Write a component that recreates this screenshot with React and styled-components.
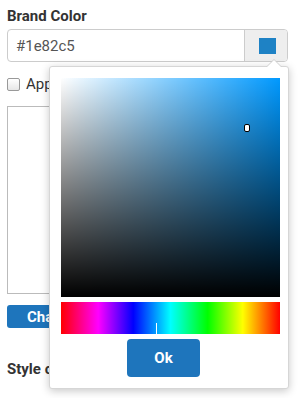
import styled, { createGlobalStyle } from "styled-components";

const Global = createGlobalStyle`
  html, body { margin: 0; padding: 0; background: #fff; }
  body { font-family: Roboto, "Liberation Sans", Arial, sans-serif; color: #333; }
`;

const Page = styled.div`
  width: 300px;
  height: 398px;
  overflow: hidden;
  padding: 7px 7px 0 7px;
  box-sizing: border-box;
  display: flex;
  flex-direction: column;
`;

const Label = styled.div`
  font-size: 15px;
  font-weight: 700;
  color: #333;
  line-height: 18px;
  margin-top: ${(p) => p.$top || 0}px;
`;

const Field = styled.div`
  position: relative;
  display: flex;
  margin-top: 4px;
  width: 281px;
  height: 33px;
  box-sizing: border-box;
  border: 1px solid #ccc;
  border-radius: 4px;
`;

const HexInput = styled.div`
  flex: 1;
  display: flex;
  align-items: center;
  padding-left: 8px;
  font-size: 15px;
  color: #555;
`;

const Addon = styled.div`
  width: 42px;
  background: #eee;
  border-left: 1px solid #ccc;
  border-radius: 0 3px 3px 0;
  display: flex;
  align-items: center;
  justify-content: center;
`;

const Swatch = styled.div`
  width: 17px;
  height: 16px;
  background: ${(p) => p.$color};
  margin-left: 2px;
`;

const CheckRow = styled.label`
  display: flex;
  align-items: center;
  gap: 6px;
  margin-top: 13px;
  font-size: 15px;
  color: #333;
`;

const Check = styled.span`
  width: 11px;
  height: 11px;
  border: 1px solid #999;
  border-radius: 2px;
  background: linear-gradient(#fff, #e6e6e6);
`;

const TextArea = styled.div`
  margin-top: 13px;
  width: 281px;
  height: 188px;
  box-sizing: border-box;
  border: 1px solid #bbb;
`;

const Button = styled.div`
  margin-top: 11px;
  width: 140px;
  height: 23px;
  background: #1e75bc;
  border-radius: 3px;
  color: #fff;
  font-weight: 700;
  font-size: 15px;
  display: flex;
  align-items: center;
  padding-left: 20px;
  box-sizing: border-box;
`;

const Popover = styled.div`
  position: absolute;
  top: 36px;
  left: 41px;
  width: 240px;
  box-sizing: border-box;
  padding: 11px 7px 11px 11px;
  background: #fff;
  border: 1px solid #d6d6d6;
  border-radius: 3px;
  box-shadow: 0 2px 8px rgba(0, 0, 0, 0.22);
  display: flex;
  flex-direction: column;
  align-items: flex-start;
  z-index: 10;

  &::before, &::after {
    content: "";
    position: absolute;
    right: 6px;
    border: 8px solid transparent;
    border-top: 0;
  }
  &::before {
    top: -8px;
    border-bottom-color: #cfcfcf;
  }
  &::after {
    top: -7px;
    border-bottom-color: #fff;
  }
`;

const Saturation = styled.div`
  position: relative;
  width: 219px;
  height: 219px;
  background:
    linear-gradient(to top, #000, rgba(0, 0, 0, 0)),
    linear-gradient(to right, #fff, rgba(255, 255, 255, 0)),
    ${(p) => p.$hue};
`;

const Cursor = styled.div`
  position: absolute;
  width: 4px;
  height: 6px;
  margin: -3px 0 0 -2px;
  border: 1px solid #000;
  border-radius: 2px;
  background: #fff;
`;

const Hue = styled.div`
  position: relative;
  margin-top: 5px;
  width: 219px;
  height: 32px;
  background: linear-gradient(
    to right,
    #ff0000 0%,
    #ff00ff 17%,
    #0000ff 33%,
    #00ffff 50%,
    #00ff00 67%,
    #ffff00 83%,
    #ff0000 100%
  );
`;

const HueMarker = styled.div`
  position: absolute;
  bottom: 0;
  width: 1px;
  height: 11px;
  background: #fff;
`;

const OkButton = styled.button`
  margin: 5px 0 0 66px;
  width: 73px;
  height: 38px;
  border: 0;
  border-radius: 4px;
  background: #1e75bc;
  color: #fff;
  font-family: Roboto, "Liberation Sans", Arial, sans-serif;
  font-weight: 700;
  font-size: 15px;
`;

export default function App() {
  const color = "#1e82c5";
  const hueDeg = 204;
  const sat = 0.845;
  const val = 0.776;
  return (
    <>
      <Global />
      <Page>
        <Label>Brand Color</Label>
        <Field>
          <HexInput>{color}</HexInput>
          <Addon>
            <Swatch $color={color} />
          </Addon>
          <Popover>
            <Saturation $hue={`hsl(${hueDeg}, 100%, 50%)`}>
              <Cursor style={{ left: `${sat * 100}%`, top: `${(1 - val) * 100}%` }} />
            </Saturation>
            <Hue>
              <HueMarker style={{ left: `${(1 - hueDeg / 360) * 100}%` }} />
            </Hue>
            <OkButton>Ok</OkButton>
          </Popover>
        </Field>
        <CheckRow>
          <Check />
          Apply to all pages
        </CheckRow>
        <TextArea />
        <Button>Change</Button>
        <Label $top={32}>Style options</Label>
      </Page>
    </>
  );
}
